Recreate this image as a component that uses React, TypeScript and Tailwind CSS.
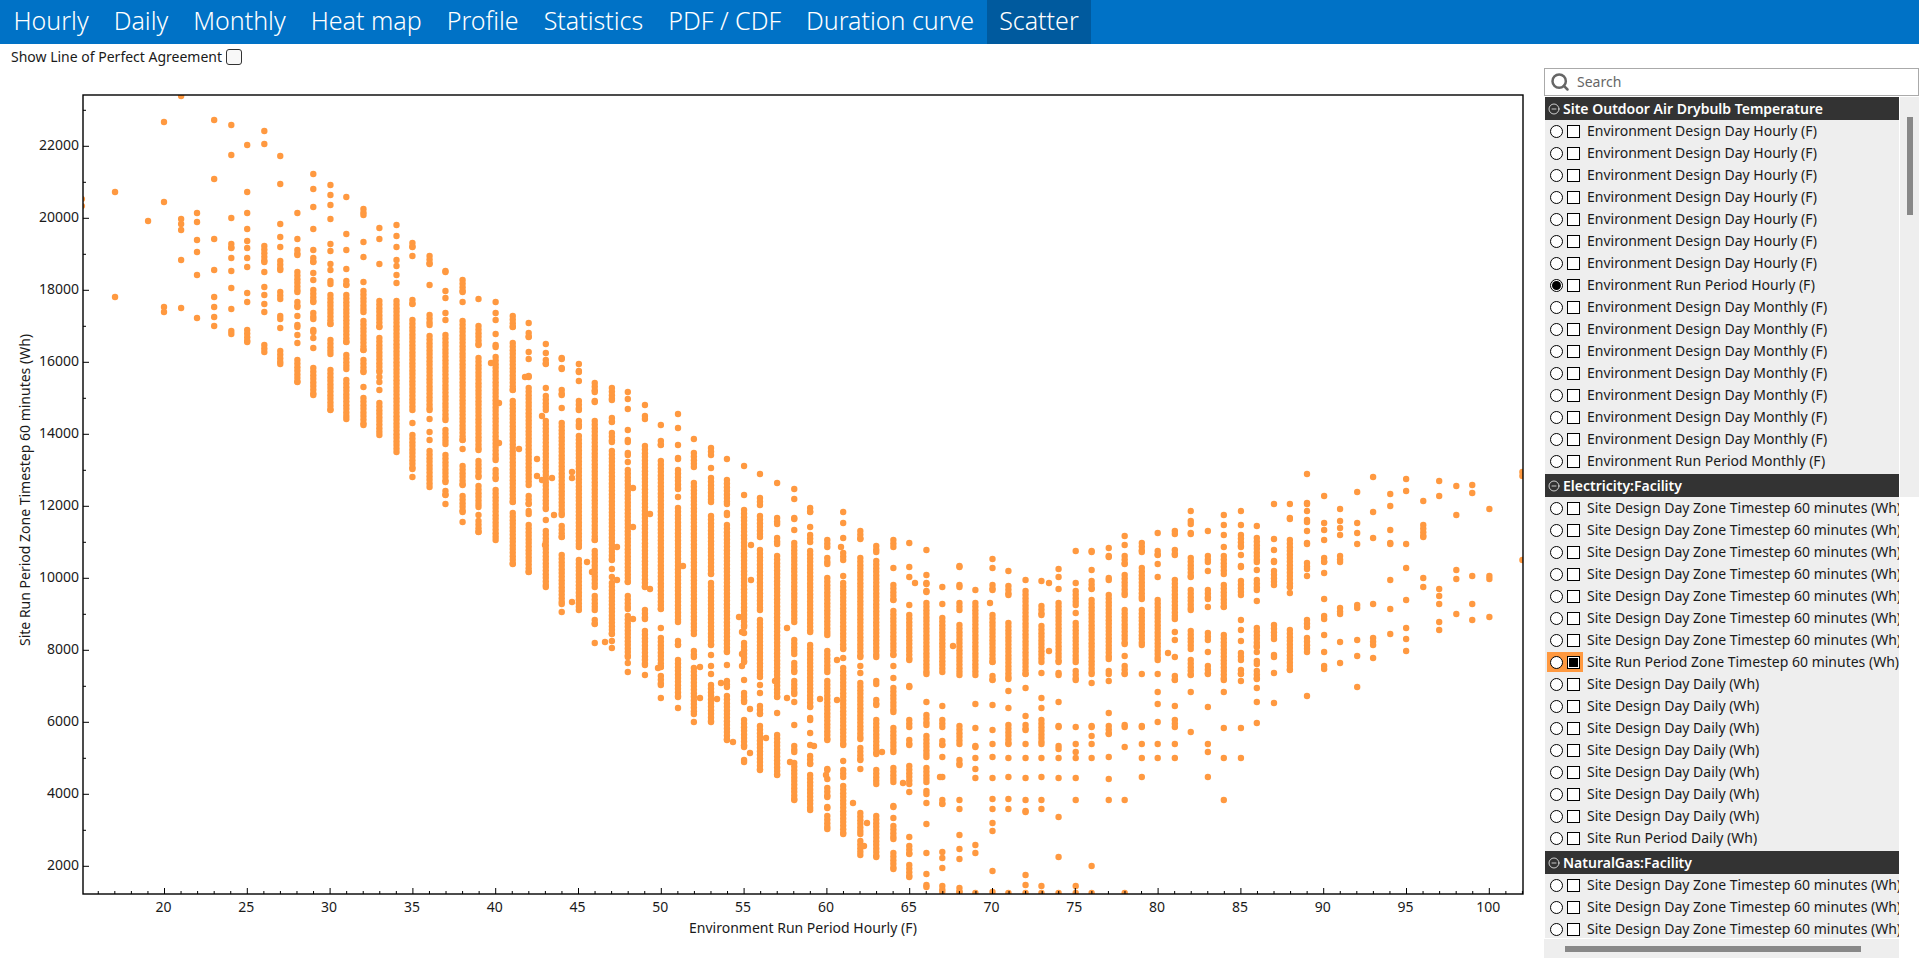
import { CircleMinus, Search } from 'lucide-react';

const tabs = ['Hourly', 'Daily', 'Monthly', 'Heat map', 'Profile', 'Statistics', 'PDF / CDF', 'Duration curve', 'Scatter'];

// scatter columns, one per integer temperature: single y = point, a-b = run of points (screen px)
const columns: [number, string][] = [
  [15, '199 206'],
  [17, '192 297'],
  [19, '221'],
  [20, '122 202 307 312'],
  [21, '96 219 224 230 260 305-311'],
  [22, '212-216 222 240 252 275 316-321'],
  [23, '120 179 239 270 297 307 315-320 326'],
  [24, '125 155 218 241-251 258 271 288 309 328-337'],
  [25, '145 192 212-216 228-232 239-244 245-251 255-261 265-270 292-296 302 327-345'],
  [26, '131 144 243-265 272 287 295-298 304 312 342-355'],
  [27, '156 184 224 237 245-250 258-273 289-302 313-322 328 348-367'],
  [28, '213 239 247-258 269-295 299-310 316 322-330 335 343 357-385'],
  [29, '174 189 207 229 250 255-265 273 280 287-305 310-322 327-335 338 348 365-398'],
  [30, '185 195 203-208 219 244 251 262-267 270-273 278-287 292-327 337-357 367-413'],
  [31, '197 234-237 250 269 278-288 292-345 352-372 377-422'],
  [32, '206-218 242 257 281-285 288-315 318-353 357-375 387 395-428'],
  [33, '228 236-242 264 298-330 335-375 377 382 390 400-438'],
  [34, '225 236 247 260 266 275 283 298-455'],
  [35, '240-250 256 297-307 317-413 423 432-472 477'],
  [36, '253-267 282-288 312-328 333-413 419 432 440 448-490'],
  [37, '268-275 291 298 313 320 332-423 427-447 452-485 488-498 504'],
  [38, '277-295 302 318-443 449 463-488 493-515 522'],
  [39, '299 323-348 355-453 458-480 483-510 515 518-535'],
  [40, '299-305 313 320 331-337 342-350 354-463 467-482 487-543'],
  [41, '313-330 340-393 398-505 510-567'],
  [42, '323 330-340 352 359 373-380 385-488 493-507 508-517 522-575'],
  [43, '344 353 357-367 388 393-413 418-512 518-523 528-590'],
  [44, '355-362 365-372 387-398 408 420-518 523-540 552-607 612'],
  [45, '364 368-375 381 398-413 418-430 433-550 557-613'],
  [46, '380-395 398-405 418-543 548-590 593-613 617-627 643'],
  [47, '385-403 415-425 430-445 448-563 569 577 580-637 641 648'],
  [48, '392 399 407-412 430 437-445 450-458 462 467-585 593-612 613-660 663 672'],
  [49, '405 413-422 443-590 607-622 628-668 672-678'],
  [50, '423-428 438-448 458-612 628 635-670 673-688 698'],
  [51, '414 428 443-448 455-462 467-492 497 505-625 638-648 657-700 708'],
  [52, '439 450-470 480-637 648-660 665-717 722'],
  [53, '445-458 468 475-505 513-577 580-648 655 666 674 682-725'],
  [54, '459 477-507 510-518 522-655 665 678-690 693-743'],
  [55, '466 495 507-630 633 640-665 680 690-705 717-750 757-765'],
  [56, '474 495-508 513-540 547-613 617-680 685 693 703-717 723-773'],
  [57, '483 515-527 535-547 553-700 713 732-778'],
  [58, '489 499 515-522 528-533 540-625 637-657 660-675 678-697 700-705 725 743-755 760-803'],
  [59, '505-515 527 532-545 548-635 642-710 715-723 733 745 753-767 772-813'],
  [60, '537-550 555-567 575-638 648-675 678-743 766-773 777-782 785-800 804-811 813-832'],
  [61, '512 523 538 550-563 576 580-652 658 665-748 761 767-780 783-837'],
  [62, '528-542 555-660 666 673 680-742 745-763 769 810-837 838-858'],
  [63, '543-555 558-660 678-687 697-708 717-757 767-787 813-860'],
  [64, '537-550 568 582-603 608-658 666 678 685-715 725-755 765-785 803-810 818 823-842 850-872'],
  [65, '543 567 577 602-608 612-663 683-690 717-730 737-748 763-787 790-795 837 843-857 862-880'],
  [66, '550 575 580-587 588-595 600-677 702 712-728 733-760 765-785 788-797 803 824 853 872-877 882-890'],
  [67, '587 604 615-675 706 717-730 738-748 757 777 797-807 852 858 868 883-895'],
  [68, '563-570 582-590 600-613 622-678 723-747 757-768 800 809 835 849 859 885-895'],
  [69, '587-593 600-678 704 728 743-750 758 769 778 845 853 893'],
  [70, '559 568 582-593 612-665 673-683 705 727-733 744 757 778 799 809 823 831 871 890-895'],
  [71, '571 583-598 620-682 691 708 722-747 758 777 799 809 893'],
  [72, '580 588-677 688 716 722-733 744 758 778 800 808-815 875 885 893'],
  [73, '581 603-618 623-665 673 698 708 717-747 758 777 800 809 886 893'],
  [74, '569 575-580 587-592 600-665 670-678 702 723-730 743-752 758 778 817 857 893'],
  [75, '551 583 588-608 613 620-665 668-683 727 744 752 758 778 800 886 893'],
  [76, '548-555 567-573 578-592 597-677 683 723-730 736 744 758 866 893'],
  [77, '548 553-560 575-583 592-662 668-677 681 713 723-737 755-760 779 800'],
  [78, '536 545 553-567 572-598 607-647 656 663-677 722-730 747 800 893'],
  [79, '540-555 565-602 607-648 674 723-730 744 758 777'],
  [80, '533 548-558 564 577 597-663 674 692-695 704 722 744 758'],
  [81, '528-537 547-558 577-622 632 637-643 657 673-683 706 717-730 744 758'],
  [82, '511 518-527 530-537 555-580 587-613 628-652 657-678 692 732'],
  [83, '531 553-565 571 587-602 607 630-643 652 663-677 707 744 752 777'],
  [84, '515 525 535 547 553-577 582-610 632-683 692 728 758 800'],
  [85, '511 525 532-550 553-558 563-570 578-598 620 630-633 641 650-663 667-677 681 728 758'],
  [86, '526 535-565 570-573 577-593 601 625-650 652 658-667 668-682 688 702 723'],
  [87, '504 539 547-553 558-565 568-588 622-642 652-660 673 703'],
  [88, '504 515-522 537-590 593 627-673'],
  [89, '474 500-507 511 517-525 531 540-547 560-572 576 617-630 635-655 696'],
  [90, '496 523 528-533 540 555-565 573 599 613-622 635 652 663-672'],
  [91, '509 521 528 535 553-565 605-617 640-645 663'],
  [92, '492 523 533 542-547 602-611 640 656 687'],
  [93, '477 512 538 604 635-648 658'],
  [94, '494 506 530 540-547 580 609 634'],
  [95, '479 491 542-547 568 600 628 639 651'],
  [96, '501 522-540 578 587'],
  [97, '481 496 589 596 604 622 630'],
  [98, '486 515 570 579 614'],
  [99, '485 493 576 604 620'],
  [100, '509 573-582 617'],
  [102, '472 476 560'],
];

// the few points that fall between the temperature columns
const strays: [number, number][] = [
  [491, 363], [499, 403], [499, 443], [519, 449], [525, 377], [537, 459], [537, 476], [545, 545],
  [542, 416], [542, 480], [552, 478], [554, 515], [572, 472], [572, 478], [572, 602], [587, 562],
  [592, 572], [605, 642], [617, 547], [617, 580], [633, 488], [633, 527], [633, 619], [650, 514],
  [650, 589], [658, 668], [683, 566], [700, 667], [700, 698], [717, 699], [721, 683], [733, 742],
  [751, 545], [751, 580], [739, 617], [742, 632], [742, 654], [742, 666], [750, 709], [750, 753],
  [766, 738], [775, 681], [787, 628], [787, 698], [790, 762], [820, 699], [814, 746], [826, 775],
  [837, 660], [837, 700], [841, 547], [853, 803], [867, 823], [864, 846], [882, 752], [903, 783],
  [915, 583], [940, 777], [953, 646], [990, 603], [1049, 583], [1049, 651], [1168, 653],
];

const columnX = (f: number) => Math.round((f - 20) * 13.53 + 134.4) * 1.2238;
const tickX = (f: number) => 164.5 + (f - 20) * 16.56;
const tickY = (v: number) => 866.3 - (v - 2000) * 0.036;

const xMajor = Array.from({ length: 17 }, (_, i) => 20 + i * 5);
const xMinor = Array.from({ length: 87 }, (_, i) => 16 + i).filter((f) => f % 5 !== 0);
const yMajor = Array.from({ length: 11 }, (_, i) => 2000 + i * 2000);
const yMinor = Array.from({ length: 11 }, (_, i) => 3000 + i * 2000);

// a run is really many overlapping markers, which gives it the scalloped edge
function markerYs(mark: string) {
  if (!mark.includes('-')) return [Number(mark)];
  const [a, b] = mark.split('-').map(Number);
  const ys: number[] = [];
  for (let y = a + 3; y < b - 3; y += 3.6) ys.push(y);
  ys.push(b - 3);
  return ys;
}

function Chart() {
  return (
    <svg viewBox="0 71 1544 887" className="block h-[887px] w-[1544px]">
      <defs>
        <clipPath id="plot">
          <rect x="83" y="95" width="1440" height="799" />
        </clipPath>
      </defs>
      <g clipPath="url(#plot)" fill="#ff9940">
        {columns.map(([f, marks]) =>
          marks.split(' ').map((mark) => (
            <g key={`${f}-${mark}`}>
              {markerYs(mark).map((y) => (
                <circle key={y} cx={columnX(f)} cy={y} r={3.2} />
              ))}
            </g>
          )),
        )}
        {strays.map(([x, y]) => (
          <circle key={`${x}-${y}`} cx={x} cy={y} r={3.2} />
        ))}
      </g>
      <rect x="83" y="95" width="1440" height="799" fill="none" stroke="#000" strokeWidth={1.4} />
      <g stroke="#000" strokeWidth={1}>
        {xMajor.map((f) => (
          <line key={f} x1={tickX(f)} x2={tickX(f)} y1={894} y2={888} />
        ))}
        {xMinor.map((f) => (
          <line key={f} x1={tickX(f)} x2={tickX(f)} y1={894} y2={891} />
        ))}
        {yMajor.map((v) => (
          <line key={v} x1={83} x2={89} y1={tickY(v)} y2={tickY(v)} />
        ))}
        {yMinor.map((v) => (
          <line key={v} x1={83} x2={86} y1={tickY(v)} y2={tickY(v)} />
        ))}
      </g>
      <g fill="#1a1a1a" fontSize={14}>
        {xMajor.map((f) => (
          <text key={f} x={tickX(f) - 1} y={912} textAnchor="middle">
            {f}
          </text>
        ))}
        {yMajor.map((v) => (
          <text key={v} x={79} y={tickY(v) + 3.5} textAnchor="end">
            {v}
          </text>
        ))}
        <text x={803} y={933} textAnchor="middle">
          Environment Run Period Hourly (F)
        </text>
        <text x={0} y={0} textAnchor="middle" transform="translate(30 490) rotate(-90)">
          Site Run Period Zone Timestep 60 minutes (Wh)
        </text>
      </g>
    </svg>
  );
}

type Row = { label: string; radio?: boolean; check?: boolean };

const repeat = (label: string, count: number): Row[] => Array.from({ length: count }, () => ({ label }));

const groups: { title: string; rows: Row[] }[] = [
  {
    title: 'Site Outdoor Air Drybulb Temperature',
    rows: [
      ...repeat('Environment Design Day Hourly (F)', 7),
      { label: 'Environment Run Period Hourly (F)', radio: true },
      ...repeat('Environment Design Day Monthly (F)', 7),
      { label: 'Environment Run Period Monthly (F)' },
    ],
  },
  {
    title: 'Electricity:Facility',
    rows: [
      ...repeat('Site Design Day Zone Timestep 60 minutes (Wh)', 7),
      { label: 'Site Run Period Zone Timestep 60 minutes (Wh)', check: true },
      ...repeat('Site Design Day Daily (Wh)', 7),
      { label: 'Site Run Period Daily (Wh)' },
    ],
  },
  {
    title: 'NaturalGas:Facility',
    rows: repeat('Site Design Day Zone Timestep 60 minutes (Wh)', 3),
  },
];

function VariableRow({ row }: { row: Row }) {
  return (
    <div className="flex h-[22px] items-center whitespace-nowrap">
      <div className={`ml-[2px] flex h-5 w-9 shrink-0 items-center gap-[4px] pl-[3px] ${row.check ? 'bg-[#ff9940]' : ''}`}>
        <span className="flex h-[13px] w-[13px] shrink-0 items-center justify-center rounded-full border border-black bg-white">
          {row.radio && <span className="h-[9px] w-[9px] rounded-full bg-black" />}
        </span>
        <span className="flex h-[13px] w-[13px] shrink-0 items-center justify-center border border-black bg-white">
          {row.check && <span className="h-[9px] w-[9px] bg-black" />}
        </span>
      </div>
      <span className="ml-[4px] pb-px text-[14px] text-[#1a1a1a]">{row.label}</span>
    </div>
  );
}

export default function App() {
  return (
    <div className="flex h-[958px] w-[1919px] flex-col overflow-hidden bg-white font-['Noto_Sans',sans-serif]">
      <nav className="flex h-11 shrink-0 bg-[#0072c6] pl-px">
        {tabs.map((tab) => (
          <div
            key={tab}
            className={`flex items-center px-[12.5px] pb-[3px] text-[25px] font-light text-white ${tab === 'Scatter' ? 'bg-[#005a9e]' : ''}`}
          >
            {tab}
          </div>
        ))}
      </nav>
      <div className="flex flex-1">
        <main className="w-[1544px] shrink-0">
          <label className="flex h-[27px] items-center gap-1 pl-[11px] text-[14px] text-[#1a1a1a]">
            <span className="pb-[2px]">Show Line of Perfect Agreement</span>
            <span className="mb-px h-4 w-4 rounded-[3px] border border-[#333] bg-[#f8f8f8]" />
          </label>
          <Chart />
        </main>
        <aside className="flex w-[375px] flex-col pt-6">
          <div className="flex h-7 shrink-0 items-center gap-[7px] border border-[#aaa] pl-[5px] text-[14px] text-[#666]">
            <Search size={20} strokeWidth={3} className="text-[#666]" />
            <span className="pb-[2px]">Search</span>
          </div>
          <div className="flex h-[842px]">
            <div className="mt-px ml-px h-[841px] w-[354px] overflow-hidden bg-[#eee]">
              {groups.map((group) => (
                <section key={group.title} className="pb-[2px]">
                  <h3 className="flex h-[23px] items-center gap-[3px] bg-[#333] pl-[3px] text-[14px] font-semibold text-white">
                    <CircleMinus size={12} strokeWidth={1.5} />
                    <span className="pb-px">{group.title}</span>
                  </h3>
                  {group.rows.map((row, i) => (
                    <VariableRow key={i} row={row} />
                  ))}
                </section>
              ))}
            </div>
            <div className="mt-px ml-px h-[400px] w-[19px] bg-[#eee] pt-[20px] pl-[7px]">
              <div className="h-[98px] w-[6px] bg-[#888]" />
            </div>
          </div>
          <div className="mt-px flex h-5 w-[355px] items-center bg-[#eee] pl-[21px]">
            <div className="h-[6px] w-[296px] bg-[#888]" />
          </div>
        </aside>
      </div>
    </div>
  );
}
